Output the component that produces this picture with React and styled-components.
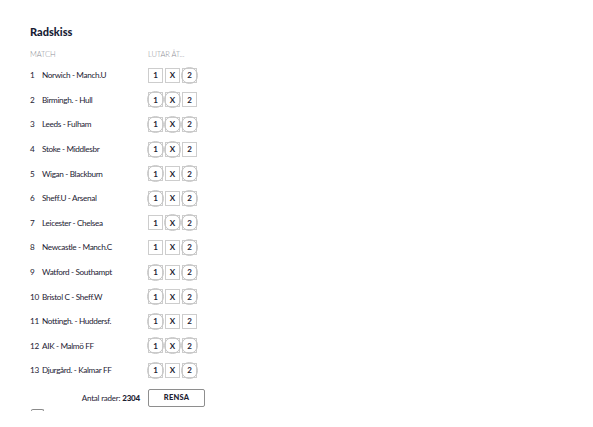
import React from "react";
import styled, { createGlobalStyle } from "styled-components";

const Global = createGlobalStyle`
  html, body { margin: 0; padding: 0; background: #fff; }
  body { font-family: "Lato", "Open Sans", sans-serif; color: #1d2233; }
`;

const Page = styled.div`
  width: 593px;
  height: 427px;
  overflow: hidden;
  padding: 25px 0 0 30px;
  box-sizing: border-box;
`;

const Title = styled.h2`
  margin: 0 0 12px;
  font-size: 11px;
  font-weight: 900;
  color: #171c35;
  line-height: 13px;
`;

const HeadRow = styled.div`
  display: grid;
  grid-template-columns: 118px auto;
  height: 12px;
  margin-bottom: 1px;
`;

const Head = styled.div`
  font-size: 7.5px;
  font-weight: 300;
  color: #8d8f96;
  text-transform: uppercase;
  letter-spacing: -0.1px;
  line-height: 10px;
`;

const Grid = styled.div`
  display: grid;
  grid-template-columns: 118px auto;
  grid-auto-rows: 24.6px;
  align-items: center;
  width: 180px;
`;

const MatchCell = styled.div`
  display: flex;
  font-size: 8.2px;
  letter-spacing: -0.35px;
  color: #1d2233;
`;

const Num = styled.span`
  width: 12px;
  flex: none;
`;

const Picks = styled.div`
  display: flex;
  gap: 2px;
`;

const Pick = styled.div`
  position: relative;
  width: 15px;
  height: 15px;
  box-sizing: border-box;
  border: 1px solid #cdcdcd;
  display: flex;
  align-items: center;
  justify-content: center;
  font-size: 8px;
  font-weight: 700;
  color: #1d2233;
  &::after {
    content: "";
    display: ${(p) => (p.$on ? "block" : "none")};
    position: absolute;
    left: -2px;
    top: -2px;
    right: -2px;
    bottom: -2px;
    border-radius: 50%;
    border: 1px solid #c4c4c4;
  }
`;

const Footer = styled.div`
  display: flex;
  align-items: center;
  margin-top: 6px;
`;

const Count = styled.div`
  width: 110px;
  text-align: right;
  font-size: 8px;
  letter-spacing: -0.2px;
  color: #1d2233;
  margin-right: 8px;
  b { font-weight: 900; }
`;

const ClearButton = styled.button`
  width: 57px;
  height: 18px;
  box-sizing: border-box;
  border: 1px solid #8e8e8e;
  border-radius: 2px;
  background: #fff;
  font-family: inherit;
  font-size: 7.5px;
  font-weight: 900;
  color: #1d2233;
  letter-spacing: 0.2px;
  padding: 0;
`;

const CheckEdge = styled.div`
  margin: 2px 0 0 1px;
  width: 13px;
  height: 2px;
  box-sizing: border-box;
  border: 1px solid #8a8a8a;
  border-bottom: none;
  border-radius: 2px 2px 0 0;
`;

const matches = [
  ["Norwich - Manch.U", "2"],
  ["Birmingh. - Hull", "1X"],
  ["Leeds - Fulham", "1X2"],
  ["Stoke - Middlesbr", "1X"],
  ["Wigan - Blackburn", "12"],
  ["Sheff.U - Arsenal", "12"],
  ["Leicester - Chelsea", "X2"],
  ["Newcastle - Manch.C", "2"],
  ["Watford - Southampt", "12"],
  ["Bristol C - Sheff.W", "12"],
  ["Nottingh. - Huddersf.", "1"],
  ["AIK - Malmö FF", "1X2"],
  ["Djurgård. - Kalmar FF", "12"],
];

export default function App() {
  return (
    <Page>
      <Global />
      <Title>Radskiss</Title>
      <HeadRow>
        <Head>Match</Head>
        <Head>Lutar åt...</Head>
      </HeadRow>
      <Grid>
        {matches.map(([name, sel], i) => (
          <React.Fragment key={name}>
            <MatchCell>
              <Num>{i + 1}</Num>
              <span>{name}</span>
            </MatchCell>
            <Picks>
              {["1", "X", "2"].map((s) => (
                <Pick key={s} $on={sel.includes(s)}>
                  {s}
                </Pick>
              ))}
            </Picks>
          </React.Fragment>
        ))}
      </Grid>
      <Footer>
        <Count>
          Antal rader: <b>2304</b>
        </Count>
        <ClearButton>RENSA</ClearButton>
      </Footer>
      <CheckEdge />
    </Page>
  );
}
